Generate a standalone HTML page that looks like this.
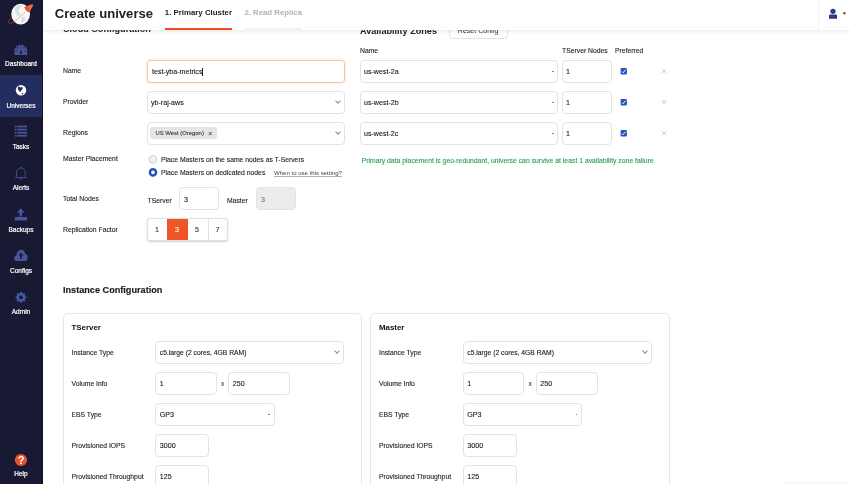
<!DOCTYPE html>
<html><head><meta charset="utf-8">
<style>
*{box-sizing:border-box;margin:0;padding:0}
html,body{width:850px;height:484px;overflow:hidden;background:#fff;-webkit-font-smoothing:antialiased;font-family:"Liberation Sans",sans-serif;color:#232329}
.a{position:absolute}
#side{position:absolute;left:0;top:0;width:43px;height:484px;background:#171a32;border-right:1px solid #0f1226}
.nav{position:absolute;left:0;width:42px;height:41.5px;color:#fff;font-size:6.5px;text-align:center}
.nav.act{background:#232e5e}
.nav .lbl{position:absolute;left:0;width:42px;text-align:center;white-space:nowrap;-webkit-text-stroke:0.2px #fff}
.lab{position:absolute;margin-top:1px;font-size:6.8px;color:#26262e;white-space:nowrap;-webkit-text-stroke:0.12px #26262e}
.inp{position:absolute;border:1px solid #e3e3e6;border-radius:4px;background:#fff}
.itx{position:absolute;margin-top:0.8px;font-size:7.1px;color:#16161a;white-space:nowrap;-webkit-text-stroke:0.1px currentColor}
.chev{position:absolute;width:4px;height:4px;border-right:1px solid #8a8a90;border-bottom:1px solid #8a8a90;transform:rotate(45deg)}
.dot{position:absolute;width:2px;height:1.2px;background:#777}
.card{position:absolute;border:1px solid #e6e6e9;border-radius:5px;background:#fff}
</style></head><body>
<div id="root" style="position:absolute;left:0;top:0;width:850px;height:484px;will-change:transform">

<!-- main content -->
<div class="a" style="left:43px;top:0;width:807px;height:484px;background:#fff"></div>

<!-- partially hidden headings -->
<div class="a" style="left:63px;top:24.2px;font-size:9.1px;font-weight:bold;color:#222;white-space:nowrap">Cloud Configuration</div>
<div class="a" style="left:360px;top:25.9px;font-size:9.1px;font-weight:bold;color:#222;white-space:nowrap">Availability Zones</div>
<div class="inp" style="left:449px;top:20px;width:58.5px;height:18.5px;"></div>
<div class="itx" style="left:457.8px;top:26.5px;font-size:7.05px;color:#333;-webkit-text-stroke:0">Reset Config</div>

<!-- left form labels -->
<div class="lab" style="left:63px;top:66px">Name</div>
<div class="lab" style="left:63px;top:97px">Provider</div>
<div class="lab" style="left:63px;top:128px">Regions</div>
<div class="lab" style="left:63px;top:154px">Master Placement</div>
<div class="lab" style="left:63px;top:194px">Total Nodes</div>
<div class="lab" style="left:63px;top:225px">Replication Factor</div>

<!-- Name -->
<div class="inp" style="left:147px;top:60px;width:198px;height:22.6px;border-color:#f8c2ae;border-radius:3.5px;box-shadow:0 0 0 1.5px rgba(239,88,36,0.09)"></div>
<div class="itx" style="left:152px;top:67px">test-yba-metrics</div>
<div class="a" style="left:202.2px;top:68px;width:0.7px;height:7.5px;background:#222"></div>
<!-- Provider -->
<div class="inp" style="left:147px;top:91px;width:198px;height:22.6px"></div>
<div class="itx" style="left:151px;top:98px">yb-raj-aws</div>
<div class="chev" style="left:336px;top:99px"></div>
<!-- Regions -->
<div class="inp" style="left:147px;top:122px;width:198px;height:22.6px"></div>
<div class="a" style="left:150px;top:126.5px;width:67px;height:12.5px;background:#e5e5e7;border-radius:3px"></div>
<div class="itx" style="left:155.5px;top:129px;font-size:5.9px;color:#333">US West (Oregon)</div>
<div class="itx" style="left:208px;top:128px;font-size:8px;color:#555">×</div>
<div class="chev" style="left:336px;top:130px"></div>

<!-- radios -->
<svg class="a" style="left:145px;top:150px" width="16" height="30"><circle cx="8" cy="9.4" r="3.9" fill="#eef0f4" stroke="#c3cad3" stroke-width="0.8"/><circle cx="8" cy="22.4" r="3.05" fill="#fff" stroke="#2553c0" stroke-width="2.5"/></svg>
<div class="itx" style="left:161px;top:155px;font-size:6.8px;color:#222">Place Masters on the same nodes as T-Servers</div>

<div class="itx" style="left:161px;top:168px;font-size:6.8px;color:#222">Place Masters on dedicated nodes</div>
<div class="itx" style="left:274px;top:169px;font-size:6.05px;color:#444;-webkit-text-stroke:0;text-decoration:underline;text-decoration-color:#b0b0b0;text-decoration-thickness:0.5px;text-underline-offset:1px">When to use this setting?</div>

<!-- total nodes -->
<div class="itx" style="left:147.5px;top:196px;font-size:6.8px;color:#222">TServer</div>
<div class="inp" style="left:179px;top:187px;width:39.5px;height:22.7px"></div>
<div class="itx" style="left:184px;top:194.8px">3</div>
<div class="itx" style="left:227px;top:196px;font-size:6.8px;color:#222">Master</div>
<div class="inp" style="left:256px;top:187px;width:39.5px;height:22.7px;background:#ececee"></div>
<div class="itx" style="left:261px;top:194.8px;color:#777">3</div>

<!-- replication factor -->
<div class="a" style="left:147px;top:218px;width:81px;height:23px;border:1px solid #e0e0e3;border-radius:3px;box-shadow:0 1px 2px rgba(0,0,0,0.18);background:#fff;overflow:hidden">
  <div class="a" style="left:19px;top:-1px;width:20.5px;height:23px;background:#ef5626"></div>
  <div class="a" style="left:59.5px;top:0;width:1px;height:21px;background:#e0e0e3"></div>
</div>
<div class="itx" style="left:155px;top:225.5px;color:#333">1</div>
<div class="itx" style="left:175px;top:225.5px;color:#fff">3</div>
<div class="itx" style="left:195px;top:225.5px;color:#333">5</div>
<div class="itx" style="left:215.5px;top:225.5px;color:#333">7</div>

<!-- AZ -->
<div class="lab" style="left:360px;top:46px">Name</div>
<div class="lab" style="left:562px;top:46px">TServer Nodes</div>
<div class="lab" style="left:615px;top:46px">Preferred</div>

<div id="azrows"></div>
<div class="inp" style="left:360px;top:60px;width:197.7px;height:22.6px;"></div>
<div class="itx" style="left:364px;top:67.0px;">us-west-2a</div>
<div class="dot" style="left:552px;top:71.1px;width:1.6px;height:1px;background:#888"></div>
<div class="inp" style="left:561.5px;top:60px;width:50px;height:22.6px;"></div>
<div class="itx" style="left:566px;top:67.0px;">1</div>
<div class="inp" style="left:360px;top:91px;width:197.7px;height:22.6px;"></div>
<div class="itx" style="left:364px;top:98.0px;">us-west-2b</div>
<div class="dot" style="left:552px;top:102.1px;width:1.6px;height:1px;background:#888"></div>
<div class="inp" style="left:561.5px;top:91px;width:50px;height:22.6px;"></div>
<div class="itx" style="left:566px;top:98.0px;">1</div>
<div class="inp" style="left:360px;top:122px;width:197.7px;height:22.6px;"></div>
<div class="itx" style="left:364px;top:129.0px;">us-west-2c</div>
<div class="dot" style="left:552px;top:133.1px;width:1.6px;height:1px;background:#888"></div>
<div class="inp" style="left:561.5px;top:122px;width:50px;height:22.6px;"></div>
<div class="itx" style="left:566px;top:129.0px;">1</div>
<svg class="a" style="left:600px;top:50px" width="80" height="110" viewBox="600 50 80 110"><rect x="620.6" y="68" width="6.3" height="6.5" rx="1.1" fill="#2553c0"/><path d="M621.9 71.5 L623.1 72.8 L625.7 69.5" stroke="#fff" stroke-width="0.9" fill="none"/><path d="M662 69.1 L666.2 73.3 M666.2 69.1 L662 73.3" stroke="#b5b5b8" stroke-width="0.7"/><rect x="620.6" y="99" width="6.3" height="6.5" rx="1.1" fill="#2553c0"/><path d="M621.9 102.5 L623.1 103.8 L625.7 100.5" stroke="#fff" stroke-width="0.9" fill="none"/><path d="M662 100.1 L666.2 104.3 M666.2 100.1 L662 104.3" stroke="#b5b5b8" stroke-width="0.7"/><rect x="620.6" y="130" width="6.3" height="6.5" rx="1.1" fill="#2553c0"/><path d="M621.9 133.5 L623.1 134.8 L625.7 131.5" stroke="#fff" stroke-width="0.9" fill="none"/><path d="M662 131.1 L666.2 135.3 M666.2 131.1 L662 135.3" stroke="#b5b5b8" stroke-width="0.7"/></svg>
<!--AZEND-->

<div class="itx" style="left:361.6px;top:156px;font-size:6.85px;color:#259c55">Primary data placement is geo-redundant, universe can survive at least 1 availability zone failure</div>

<!-- Instance configuration -->
<div class="a" style="left:63px;top:285px;font-size:9.15px;font-weight:bold;color:#1a1a1a;-webkit-text-stroke:0.15px #1a1a1a;white-space:nowrap">Instance Configuration</div>

<div class="card" style="left:63px;top:313px;width:299px;height:200px"></div>
<div class="card" style="left:370px;top:313px;width:300px;height:200px"></div>

<div id="cards"></div>
<div class="a" style="left:71.5px;top:323.1px;font-size:7.9px;font-weight:bold;color:#111;white-space:nowrap">TServer</div>
<div class="lab" style="left:71.5px;top:347.6px">Instance Type</div>
<div class="lab" style="left:71.5px;top:378.8px">Volume Info</div>
<div class="lab" style="left:71.5px;top:410.0px">EBS Type</div>
<div class="lab" style="left:71.5px;top:441.2px">Provisioned IOPS</div>
<div class="lab" style="left:71.5px;top:472.4px">Provisioned Throughput</div>
<div class="inp" style="left:155px;top:341px;width:189px;height:22.5px;"></div>
<div class="itx" style="left:159.8px;top:347.8px;font-size:6.75px">c5.large (2 cores, 4GB RAM)</div>
<div class="chev" style="left:335px;top:349px"></div>
<div class="inp" style="left:155px;top:372px;width:61.7px;height:22.5px;"></div>
<div class="itx" style="left:159.8px;top:378.8px;">1</div>
<div class="itx" style="left:221px;top:379.3px;font-size:6.5px;color:#444">x</div>
<div class="inp" style="left:228px;top:372px;width:62.3px;height:22.5px;"></div>
<div class="itx" style="left:232.8px;top:378.8px;">250</div>
<div class="inp" style="left:155px;top:403px;width:119.5px;height:22.5px;"></div>
<div class="itx" style="left:159.8px;top:409.8px;">GP3</div>
<div class="dot" style="left:268px;top:414px;width:1.6px;height:1px;background:#888"></div>
<div class="inp" style="left:155px;top:434px;width:54.3px;height:22.5px;"></div>
<div class="itx" style="left:159.8px;top:440.8px;">3000</div>
<div class="inp" style="left:155px;top:465px;width:54.3px;height:22.5px;"></div>
<div class="itx" style="left:159.8px;top:471.8px;">125</div>
<div class="a" style="left:379.0px;top:323.1px;font-size:7.9px;font-weight:bold;color:#111;white-space:nowrap">Master</div>
<div class="lab" style="left:379.0px;top:347.6px">Instance Type</div>
<div class="lab" style="left:379.0px;top:378.8px">Volume Info</div>
<div class="lab" style="left:379.0px;top:410.0px">EBS Type</div>
<div class="lab" style="left:379.0px;top:441.2px">Provisioned IOPS</div>
<div class="lab" style="left:379.0px;top:472.4px">Provisioned Throughput</div>
<div class="inp" style="left:462.5px;top:341px;width:189.0px;height:22.5px;"></div>
<div class="itx" style="left:467.3px;top:347.8px;font-size:6.75px">c5.large (2 cores, 4GB RAM)</div>
<div class="chev" style="left:642.5px;top:349px"></div>
<div class="inp" style="left:462.5px;top:372px;width:61.7px;height:22.5px;"></div>
<div class="itx" style="left:467.3px;top:378.8px;">1</div>
<div class="itx" style="left:528.5px;top:379.3px;font-size:6.5px;color:#444">x</div>
<div class="inp" style="left:535.5px;top:372px;width:62.3px;height:22.5px;"></div>
<div class="itx" style="left:540.3px;top:378.8px;">250</div>
<div class="inp" style="left:462.5px;top:403px;width:119.5px;height:22.5px;"></div>
<div class="itx" style="left:467.3px;top:409.8px;">GP3</div>
<div class="dot" style="left:575.5px;top:414px;width:1.6px;height:1px;background:#888"></div>
<div class="inp" style="left:462.5px;top:434px;width:54.3px;height:22.5px;"></div>
<div class="itx" style="left:467.3px;top:440.8px;">3000</div>
<div class="inp" style="left:462.5px;top:465px;width:54.3px;height:22.5px;"></div>
<div class="itx" style="left:467.3px;top:471.8px;">125</div>
<!--CARDSEND-->

<!-- header -->
<div class="a" style="left:43px;top:0;width:807px;height:29.5px;background:#fff;box-shadow:0 1px 4px rgba(0,0,0,0.10)"></div>
<div class="a" style="left:54.8px;top:5.7px;font-size:13.1px;font-weight:bold;color:#222;white-space:nowrap">Create universe</div>
<div class="a" style="left:164.8px;top:8px;font-size:7.85px;font-weight:bold;color:#1d1d22;white-space:nowrap">1. Primary Cluster</div>
<div class="a" style="left:164.8px;top:27.5px;width:67.4px;height:2px;background:#ef4b1f"></div>
<div class="a" style="left:244.4px;top:8px;font-size:7.8px;font-weight:bold;color:#b3b3b8;white-space:nowrap">2. Read Replica</div>
<div class="a" style="left:244.4px;top:28px;width:57.4px;height:1.5px;background:#f2f2f3"></div>
<div class="a" style="left:818px;top:0;width:1px;height:29.5px;background:#f4f4f5"></div>

<svg class="a" style="left:820px;top:0" width="30" height="30" viewBox="820 0 30 30">
<circle cx="833" cy="11.3" r="2.6" fill="#2d3b80"/>
<path d="M829 15.2 Q829 14.4 830 14.4 L836 14.4 Q837 14.4 837 15.2 L837 18.8 L829 18.8Z" fill="#2d3b80"/>
<path d="M842.8 12.6 L846 12.6 L844.4 14.8Z" fill="#222"/>
</svg>
<!-- sidebar -->
<div id="side"></div>
<div id="navs"></div>
<div class="nav" style="top:34px"><div class="lbl" style="top:26.2px">Dashboard</div></div>
<div class="nav act" style="top:75.33px"><div class="lbl" style="top:26.2px">Universes</div></div>
<div class="nav" style="top:116.67px"><div class="lbl" style="top:26.2px">Tasks</div></div>
<div class="nav" style="top:158px"><div class="lbl" style="top:26.2px">Alerts</div></div>
<div class="nav" style="top:199.33px"><div class="lbl" style="top:26.2px">Backups</div></div>
<div class="nav" style="top:240.67px"><div class="lbl" style="top:26.2px">Configs</div></div>
<div class="nav" style="top:282px"><div class="lbl" style="top:26.2px">Admin</div></div>
<div class="nav" style="top:440px"><div class="lbl" style="top:30.3px">Help</div></div>
<div class="a" style="left:785px;top:485px;width:80px;height:20px;background:#fff;box-shadow:0 -1px 5px rgba(0,0,0,0.07)"></div>
<!--NAVEND-->
<svg class="a" style="left:0;top:0" width="43" height="484" viewBox="0 0 43 484">
<!-- logo -->
<g>
<path d="M10.8 18.2 C9.6 19.6 8.6 21 8.5 22.2 C8.6 23.4 10.2 23.6 12 23.1 C12.8 22.9 13.6 22.5 14.4 22.1" stroke="#e8532b" stroke-width="0.75" fill="none" stroke-dasharray="1.3 0.7"/>
<ellipse cx="20.65" cy="14.1" rx="9.4" ry="10.3" fill="#f6f7f8"/>
<path d="M14.8 7.6 C16.5 5.6 19.5 4.6 22.5 5.3 C22.4 6.5 21.2 7.2 20.5 7.8 C19.8 8.3 18.6 9 18.4 10.2 C18.4 11.6 19.9 12.6 20.4 13.8 C20.6 15 20 16 19 16.3 C17.7 16 16.6 14.7 15.8 13.3 C14.9 11.6 14.3 9.4 14.8 7.6Z" fill="#d9dee2"/>
<path d="M21.6 17.2 C23 16.6 24.6 16.8 25.4 17.8 C25.6 19.2 24.8 21 23.6 22.4 C22.8 23.2 21.8 23.6 21.2 23.4 C21.6 21.6 22 19.6 21.6 17.2Z" fill="#d9dee2"/>
<path d="M14.2 21.8 L25 12.4" stroke="#f3866a" stroke-width="0.6"/>
<path d="M24.5 7 L27.5 6 L30 4.7 L33 4.2 L32.8 6.5 L31.2 8.8 L29.5 12.5 L27.5 11.5 L25.5 9.5Z" fill="#f06a42"/>
<path d="M24.5 7 L27.5 6.6 L29.2 9.2 L29.5 12.5 L27.5 11.5 L25.5 9.5Z" fill="#e8502a"/>
</g>
<!-- dashboard gauge -->
<path d="M14.5 54.9 L14.5 51 A6.35 6.35 0 0 1 27.2 51 L27.2 54.9Z" fill="#47559a"/>
<g fill="#161a33"><circle cx="20.85" cy="46.5" r="0.8"/><circle cx="17.6" cy="47.8" r="0.8"/><circle cx="24.1" cy="47.8" r="0.8"/><circle cx="16.3" cy="51" r="0.8"/><circle cx="25.4" cy="51" r="0.8"/><circle cx="20.85" cy="52.7" r="1.2"/><path d="M20.5 52.5 L21.4 48 L21.6 48 L21.3 52.5Z"/></g>
<!-- universes globe -->
<circle cx="21" cy="90.3" r="5.2" fill="#fff"/>
<path d="M17.9 87.2 Q18.4 86.4 19.2 86.6 Q20 86.9 20.4 87.8 Q21 87 21.5 87 Q22.4 87 22.8 87.6 Q22.9 88.5 22.4 89.2 Q21.6 90 21 90.6 Q20.8 91.4 20.6 92 Q20 92.1 19.6 91.6 Q18.8 90.9 18.4 90 Q17.8 88.6 17.9 87.2Z" fill="#232e5e"/>
<circle cx="22.5" cy="93.8" r="0.8" fill="#232e5e"/>
<!-- tasks -->
<g fill="#47559a"><rect x="14.8" y="125.6" width="1.8" height="1.8"/><rect x="17.4" y="125.6" width="9.6" height="1.8"/>
<rect x="14.8" y="128.7" width="1.8" height="1.8"/><rect x="17.4" y="128.7" width="9.6" height="1.8"/>
<rect x="14.8" y="131.8" width="1.8" height="1.8"/><rect x="17.4" y="131.8" width="9.6" height="1.8"/>
<rect x="14.8" y="134.8" width="1.8" height="1.8"/><rect x="17.4" y="134.8" width="9.6" height="1.8"/></g>
<!-- alerts bell -->
<path d="M16.5 176.3 L16.5 172.4 C16.5 169.8 18.4 168 20.85 168 C23.3 168 25.2 169.8 25.2 172.4 L25.2 176.3 L26.4 177.6 L15.3 177.6Z" fill="none" stroke="#47559a" stroke-width="0.9" stroke-linejoin="round"/>
<path d="M19.6 178.4 C19.8 179.3 21.9 179.3 22.1 178.4" fill="none" stroke="#47559a" stroke-width="0.9"/>
<circle cx="20.85" cy="167.4" r="0.6" fill="#47559a"/>
<!-- backups -->
<g fill="#47559a"><path d="M20.75 208.2 L24.7 212.8 L22 212.8 L22 216.6 L19.5 216.6 L19.5 212.8 L16.8 212.8Z"/>
<rect x="14.8" y="217" width="12.2" height="3.6" rx="0.4"/></g>
<!-- configs cloud -->
<path d="M16.6 261 C14.9 261 14.1 259.6 14.1 258.2 C14.1 256.6 15.2 255.5 16.5 255.4 C16.6 252.2 18.7 249.8 21.1 249.8 C23.4 249.8 25.1 251.8 25.4 254.2 C26.8 254.4 27.8 255.8 27.8 257.5 C27.8 259.5 26.6 261 24.8 261Z" fill="#47559a"/>
<path d="M21 252.8 L23.4 255.5 L21.8 255.5 L21.8 258.9 L20.2 258.9 L20.2 255.5 L18.6 255.5Z" fill="#161a33"/>
<!-- admin gear -->
<g transform="translate(21,297.4)" fill="#47559a">
<circle r="4.1"/>
<g><rect x="-1.1" y="-5.4" width="2.2" height="10.8" rx="0.5"/><rect x="-1.1" y="-5.4" width="2.2" height="10.8" rx="0.5" transform="rotate(45)"/><rect x="-1.1" y="-5.4" width="2.2" height="10.8" rx="0.5" transform="rotate(90)"/><rect x="-1.1" y="-5.4" width="2.2" height="10.8" rx="0.5" transform="rotate(135)"/></g>
<circle r="1.8" fill="#161a33"/>
</g>
<!-- help -->
<circle cx="20.9" cy="460" r="6.1" fill="#e8532b"/>
<text x="21" y="464.2" font-family="Liberation Sans" font-weight="bold" font-size="11" fill="#fff" text-anchor="middle">?</text>
</svg>

</div>
</body></html>
